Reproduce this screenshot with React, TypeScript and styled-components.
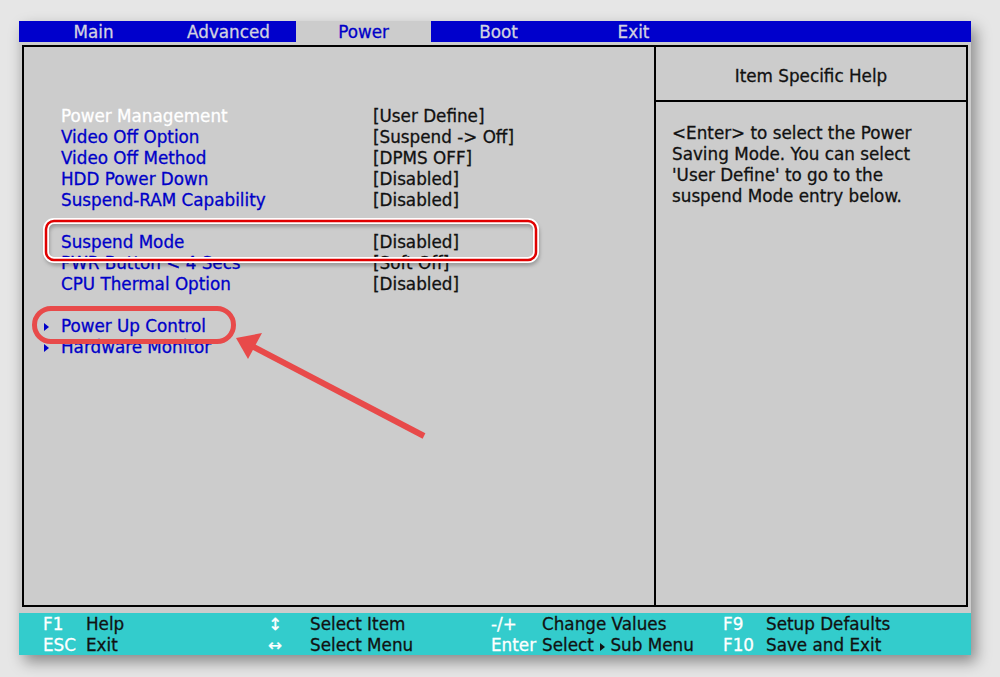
import React from "react";
import styled, { createGlobalStyle } from "styled-components";

const GlobalStyle = createGlobalStyle`
  html, body {
    margin: 0;
    padding: 0;
    background: #e6e6e6;
  }
  body {
    font-family: "DejaVu Sans", "Liberation Sans", sans-serif;
    font-size: 16.8px;
    -webkit-text-stroke: 0.3px currentColor;
  }
`;

const BLUE = "#0000c8";
const GRAY = "#cccccc";
const CYAN = "#33cccc";

type Item = { label: string; value?: string; white?: boolean; sub?: boolean } | null;

const items: Item[] = [
  { label: "Power Management", value: "[User Define]", white: true },
  { label: "Video Off Option", value: "[Suspend -> Off]" },
  { label: "Video Off Method", value: "[DPMS OFF]" },
  { label: "HDD Power Down", value: "[Disabled]" },
  { label: "Suspend-RAM Capability", value: "[Disabled]" },
  null,
  { label: "Suspend Mode", value: "[Disabled]" },
  { label: "PWR Button < 4 Secs", value: "[Soft Off]" },
  { label: "CPU Thermal Option", value: "[Disabled]" },
  null,
  { label: "Power Up Control", sub: true },
  { label: "Hardware Monitor", sub: true },
];

const tabs = ["Main", "Advanced", "Power", "Boot", "Exit"];

const helpLines = [
  "<Enter> to select the Power",
  "Saving Mode. You can select",
  "'User Define' to go to the",
  "suspend Mode entry below.",
];

export default function App() {
  return (
    <Page>
      <GlobalStyle />
      <Screen>
        <TabBar>
          {tabs.map((t) => (
            <Tab key={t} $active={t === "Power"}>
              {t}
            </Tab>
          ))}
        </TabBar>

        <Frame>
          <SettingsPane>
            {items.map((it, i) =>
              it ? (
                <Row key={i}>
                  <Marker>{it.sub && <Triangle $color={BLUE} />}</Marker>
                  <Label $white={it.white}>{it.label}</Label>
                  <Value>{it.value}</Value>
                </Row>
              ) : (
                <Spacer key={i} />
              )
            )}
          </SettingsPane>

          <HelpPane>
            <HelpTitle>Item Specific Help</HelpTitle>
            <HelpText>
              {helpLines.map((l) => (
                <div key={l}>{l}</div>
              ))}
            </HelpText>
          </HelpPane>
        </Frame>

        <Footer>
          <Key>F1</Key>
          <Desc>Help</Desc>
          <Key $glyph>↕</Key>
          <Desc>Select Item</Desc>
          <Key>-/+</Key>
          <Desc>Change Values</Desc>
          <Key>F9</Key>
          <Desc>Setup Defaults</Desc>

          <Key>ESC</Key>
          <Desc>Exit</Desc>
          <Key $glyph>↔</Key>
          <Desc>Select Menu</Desc>
          <Key>Enter</Key>
          <Desc>
            Select <Triangle $color="#111" /> Sub Menu
          </Desc>
          <Key>F10</Key>
          <Desc>Save and Exit</Desc>
        </Footer>
      </Screen>

      {/* red call-outs drawn over the setup screen */}
      <Marks viewBox="0 0 1000 677" width="1000" height="677">
        <defs>
          <filter id="soft" x="-10%" y="-30%" width="120%" height="160%">
            <feGaussianBlur stdDeviation="2" />
          </filter>
        </defs>
        <rect x="47" y="224" width="490" height="39" rx="8" fill="none" stroke="rgba(0,0,0,0.35)" strokeWidth="4" filter="url(#soft)" />
        <rect x="46" y="221" width="490" height="39" rx="8" fill="none" stroke="#ffffff" strokeWidth="6" />
        <rect x="46" y="221" width="490" height="39" rx="8" fill="none" stroke="#e00000" strokeWidth="2.5" />

        <rect x="34.5" y="308.5" width="199" height="33" rx="16.5" fill="none" stroke="#e84a4a" strokeWidth="5" />

        <line x1="424" y1="436" x2="250" y2="345" stroke="#e84a4a" strokeWidth="6" />
        <polygon points="236,338 262,333 248,359" fill="#e84a4a" />
      </Marks>
    </Page>
  );
}

const Page = styled.div`
  position: relative;
  width: 1000px;
  height: 677px;
  overflow: hidden;
  padding: 21px 0 0 19px;
  box-sizing: border-box;
`;

const Screen = styled.div`
  width: 952px;
  background: ${GRAY};
  padding: 0 3px;
  box-sizing: border-box;
  box-shadow: 5px 7px 14px rgba(0, 0, 0, 0.4);
  display: flex;
  flex-direction: column;
`;

const TabBar = styled.div`
  height: 21px;
  margin: 0 -3px;
  padding-left: 7px;
  background: #0000cc;
  display: flex;
`;

const Tab = styled.div<{ $active?: boolean }>`
  width: 135px;
  text-align: center;
  line-height: 22px;
  color: ${(p) => (p.$active ? BLUE : "#d2d2e0")};
  background: ${(p) => (p.$active ? GRAY : "transparent")};
`;

const Frame = styled.div`
  margin-top: 3px;
  height: 562px;
  border: 2px solid #000;
  box-sizing: border-box;
  display: flex;
`;

const SettingsPane = styled.div`
  width: 632px;
  border-right: 2px solid #000;
  padding: 59px 0 0 19px;
  box-sizing: border-box;
`;

const Row = styled.div`
  display: grid;
  grid-template-columns: 18px 312px 1fr;
  height: 21px;
  line-height: 21px;
`;

const Spacer = styled.div`
  height: 21px;
`;

const Marker = styled.div`
  display: flex;
  align-items: center;
`;

const Triangle = styled.span<{ $color: string }>`
  display: inline-block;
  width: 0;
  height: 0;
  border-top: 4px solid transparent;
  border-bottom: 4px solid transparent;
  border-left: 5px solid ${(p) => p.$color};
  margin-left: 1px;
  -webkit-text-stroke: 0;
`;

const Label = styled.div<{ $white?: boolean }>`
  color: ${(p) => (p.$white ? "#ffffff" : BLUE)};
  white-space: nowrap;
`;

const Value = styled.div`
  color: #111;
  white-space: nowrap;
`;

const HelpPane = styled.div`
  flex: 1;
  display: flex;
  flex-direction: column;
`;

const HelpTitle = styled.div`
  height: 55px;
  padding-top: 4px;
  box-sizing: border-box;
  border-bottom: 2px solid #000;
  display: flex;
  align-items: center;
  justify-content: center;
  color: #111;
`;

const HelpText = styled.div`
  padding: 21px 0 0 16px;
  line-height: 21px;
  color: #111;
  white-space: nowrap;
`;

const Footer = styled.div`
  margin: 6px -3px 0;
  height: 42px;
  background: ${CYAN};
  padding: 1px 0 0 24px;
  box-sizing: border-box;
  display: grid;
  grid-template-columns: 43px 180px 44px 181px 51px 181px 43px 1fr;
  grid-auto-rows: 20.5px;
  line-height: 20.5px;
`;

const Key = styled.div<{ $glyph?: boolean }>`
  color: #ffffff;
  padding-left: ${(p) => (p.$glyph ? 2 : 0)}px;
  white-space: nowrap;
`;

const Desc = styled.div`
  color: #111;
  white-space: nowrap;
`;

const Marks = styled.svg`
  position: absolute;
  left: 0;
  top: 0;
  pointer-events: none;
`;
